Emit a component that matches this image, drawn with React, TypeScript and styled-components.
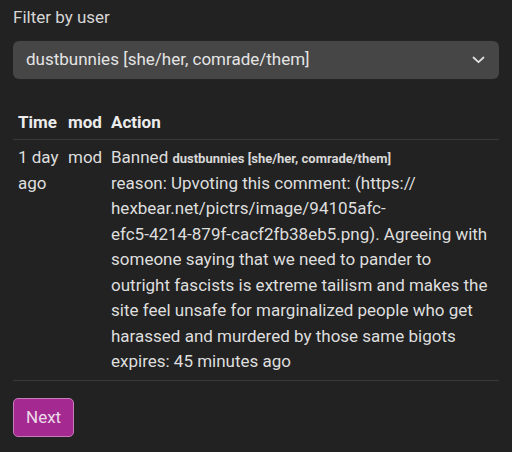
import React from "react";
import styled, { createGlobalStyle } from "styled-components";

const Global = createGlobalStyle`
  html, body { margin: 0; padding: 0; background: #222222; }
  body { font-family: Roboto, "Noto Sans", sans-serif; color: #dedede; }
`;

const Page = styled.div`
  padding: 5px 13px 14px 13px;
  font-size: 17px;
  line-height: 1.5;
`;

const Label = styled.label`
  display: block;
  margin-bottom: 10px;
  color: #d6d6d6;
`;

const SelectBox = styled.div`
  height: 38px;
  box-sizing: border-box;
  background: #464646;
  border-radius: 6px;
  display: flex;
  align-items: center;
  justify-content: space-between;
  padding: 0 14px 0 13px;
  color: #e4e4e4;
`;

const Table = styled.table`
  width: 100%;
  margin-top: 26px;
  border-collapse: collapse;
  table-layout: fixed;
`;

const Th = styled.th<{ $w?: number }>`
  text-align: left;
  font-weight: 700;
  padding: 5px 5px 4px 5px;
  border-bottom: 1px solid #3a3a3a;
  color: #ececec;
  box-sizing: border-box;
  white-space: nowrap;
  width: ${(p) => (p.$w ? `${p.$w}px` : "auto")};
`;

const Td = styled.td`
  vertical-align: top;
  padding: 5px 5px 5px 5px;
  border-bottom: 1px solid #3a3a3a;
  color: #dedede;
`;

const User = styled.span`
  font-size: 13px;
  font-weight: 700;
  color: #d8d8d8;
`;

const NoWrap = styled.span`
  white-space: nowrap;
`;

const Button = styled.button`
  margin-top: 17px;
  font-family: Roboto, sans-serif;
  font-size: 17px;
  line-height: 1.5;
  background: #a42a91;
  color: #ecdcea;
  border: 1px solid #c87ab9;
  border-radius: 5px;
  padding: 6px 12px;
  height: 39px;
`;

function Chevron() {
  return (
    <svg width="13" height="8" viewBox="0 0 13 8" fill="none">
      <path d="M1.5 1.5 L6.5 6.2 L11.5 1.5" stroke="#e0e0e0" strokeWidth="1.8" strokeLinecap="round" strokeLinejoin="round" />
    </svg>
  );
}

export default function App() {
  return (
    <>
      <Global />
      <Page>
        <Label>Filter by user</Label>
        <SelectBox>
          <span>dustbunnies [she/her, comrade/them]</span>
          <Chevron />
        </SelectBox>
        <Table>
          <thead>
            <tr>
              <Th $w={50}>Time</Th>
              <Th $w={43}>mod</Th>
              <Th>Action</Th>
            </tr>
          </thead>
          <tbody>
            <tr>
              <Td>{"1\u00a0day ago"}</Td>
              <Td>mod</Td>
              <Td>
                Banned <User>dustbunnies [she/her, comrade/them]</User>
                <br />
                reason: Upvoting this comment: (https://
                hexbear.net/pictrs/image/94105afc-<NoWrap>efc5-4214-879f-cacf2fb38eb5.png).</NoWrap> Agreeing with someone saying that we need to pander to outright fascists is extreme tailism and makes the site feel unsafe for marginalized people who get harassed and murdered by those same bigots
                <br />
                expires: 45 minutes ago
              </Td>
            </tr>
          </tbody>
        </Table>
        <Button>Next</Button>
      </Page>
    </>
  );
}
